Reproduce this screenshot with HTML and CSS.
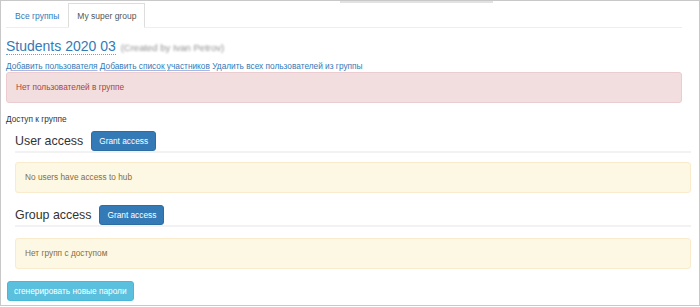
FILE: index.html
```html
<!DOCTYPE html>
<html lang="ru">
<head>
  <meta charset="UTF-8">
  <title>My super group</title>
  <link rel="stylesheet" href="styles.css">
</head>
<body>
  <div class="frame">
    <div class="scroll-thumb"></div>

    <ul class="nav-tabs">
      <li class="tab"><a href="#">Все группы</a></li>
      <li class="tab active"><a href="#">My super group</a></li>
    </ul>

    <h2 class="group-title">
      <a href="#" class="title-link">Students 2020 03</a>
      <span class="owner">(Created by Ivan Petrov)</span>
    </h2>

    <div class="actions">
      <a href="#" class="u">Добавить пользователя</a>
      <a href="#" class="u">Добавить список участников</a>
      <a href="#">Удалить всех пользователей из группы</a>
    </div>

    <div class="alert alert-danger">Нет пользователей в группе</div>

    <div class="label">Доступ к группе</div>

    <div class="access">
      <div class="access-head">
        <h3>User access</h3>
        <button class="btn btn-primary">Grant access</button>
      </div>
      <div class="alert alert-warning">No users have access to hub</div>

      <div class="access-head">
        <h3>Group access</h3>
        <button class="btn btn-primary">Grant access</button>
      </div>
      <div class="alert alert-warning">Нет групп с доступом</div>
    </div>

    <button class="btn btn-info">сгенерировать новые пароли</button>
  </div>
</body>
</html>
```

FILE: styles.css
```css
html, body {
  margin: 0; padding: 0;
  background: #fff;
  font-family: "Liberation Sans", Arial, sans-serif;
  color: #333;
}

.frame {
  position: relative;
  box-sizing: border-box;
  height: 306px;
  border: 1px solid #c8c8c8;
  padding: 0 17px 0 5px;
  overflow: hidden;
}

/* thin grey strip at the very top */
.scroll-thumb {
  position: absolute;
  top: 0; left: 339px;
  width: 153px; height: 2px;
  background: #e2e2e2;
}

/* tabs */
.nav-tabs {
  list-style: none;
  margin: 2px 0 0; padding: 0;
  display: flex;
  border-bottom: 1px solid #eee;
}
.tab {
  margin-bottom: -1px;
  border: 1px solid transparent;
}
.tab a {
  display: block;
  padding: 6px 8px 5px;
  font-size: 8.5px; line-height: 12px;
  color: #337ab7;
  text-decoration: none;
}
.tab.active {
  border-color: #ddd;
  border-bottom-color: #fff;
  background: #fff;
}
.tab.active a { color: #555; }

/* title */
.group-title {
  margin: 10px 0 0;
  font-size: 14px; line-height: 17px;
  font-weight: normal;
}
.title-link {
  color: #337ab7;
  text-decoration: none;
  border-bottom: 1px dotted #6fa0d0;
}
.owner {
  font-size: 9.5px;
  color: #8f8f8f;
  filter: blur(1px);
  margin-left: 1px;
}

.actions {
  margin-top: 5px;
  font-size: 8.3px; line-height: 11px;
}
.actions a {
  color: #337ab7;
  text-decoration: none;
}
.actions a.u {
  text-decoration: underline;
  text-decoration-color: #a8b8e0;
}

/* alerts */
.alert {
  border: 1px solid transparent;
  border-radius: 3px;
  padding: 9px;
  font-size: 8.3px; line-height: 11px;
}
.alert-danger {
  margin-top: 0;
  background: #f2dede;
  border-color: #ebccd1;
  color: #a94442;
}
.alert-warning {
  margin-top: 9px;
  background: #fcf8e3;
  border-color: #faebcc;
  color: #8a6d3b;
}

.label {
  margin-top: 11px;
  font-size: 8.3px; line-height: 11px;
}

/* access blocks */
.access {
  margin: 0 -9px 0 9px;
}
.access-head {
  display: flex;
  align-items: center;
  gap: 8px;
  margin-top: 6px;
  border-bottom: 2px solid #f2f2f2;
}
.alert-warning + .access-head { margin-top: 12px; }
.access-head + .alert-warning { margin-top: 9px; }
.access-head ~ .access-head + .alert-warning { margin-top: 11px; }
.access-head h3 {
  margin: 0;
  font-size: 12.4px; line-height: 16px;
  font-weight: normal;
}

/* buttons */
.btn {
  font-family: inherit;
  font-size: 8.3px; line-height: 11px;
  padding: 4px 7px 3px;
  border: 1px solid transparent;
  border-radius: 3px;
  color: #fff;
  cursor: pointer;
}
.btn-primary {
  background: #337ab7;
  border-color: #2e6da4;
}
.btn-info {
  margin: 12px 0 0 1px;
  padding: 4px 6px 3px;
  background: #5bc0de;
  border-color: #46b8da;
}
```
